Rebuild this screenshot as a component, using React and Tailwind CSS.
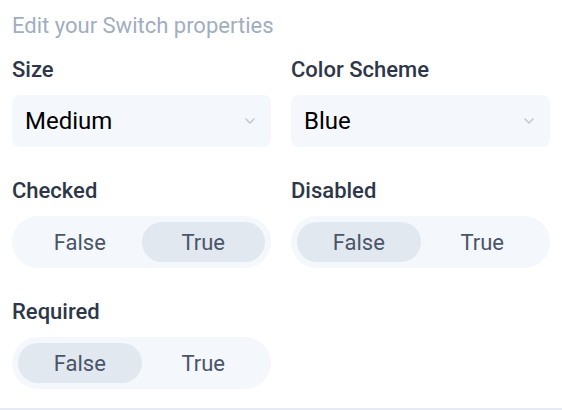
import { ChevronDown } from 'lucide-react'

function Select({ value }) {
  return (
    <div className="h-[52px] rounded-lg bg-[#f4f7fc] flex items-center justify-between pl-[13px] pr-[13px]">
      <span className="text-[24px] text-black">{value}</span>
      <ChevronDown size={16} strokeWidth={2.4} className="text-[#c3c8d0]" />
    </div>
  )
}

function Toggle({ value }) {
  return (
    <div className="h-[52px] rounded-full bg-[#f4f7fc] p-[6px] flex">
      {['False', 'True'].map((opt) => (
        <div
          key={opt}
          className={
            'flex-1 rounded-full flex items-center justify-center text-[22px] text-[#4a5568] ' +
            (value === opt ? 'bg-[#e2e8f0]' : '')
          }
        >
          {opt}
        </div>
      ))}
    </div>
  )
}

function Field({ label, children }) {
  return (
    <div className="flex flex-col">
      <p className="text-[22px] leading-[27px] font-medium text-[#2d3748] mb-3">{label}</p>
      {children}
    </div>
  )
}

export default function App() {
  return (
    <div className="w-[562px] h-[410px] bg-white flex flex-col font-['Roboto',sans-serif]">
      <div className="flex-1 px-3 pt-[11px]">
        {/* Titre */}
        <p className="text-[22px] leading-[30px] text-[#a0aec0] mb-[15px]">Edit your Switch properties</p>

        <div className="grid grid-cols-2 gap-x-5 gap-y-[30px]">
          <Field label="Size">
            <Select value="Medium" />
          </Field>
          <Field label="Color Scheme">
            <Select value="Blue" />
          </Field>
          <Field label="Checked">
            <Toggle value="True" />
          </Field>
          <Field label="Disabled">
            <Toggle value="False" />
          </Field>
          <Field label="Required">
            <Toggle value="False" />
          </Field>
        </div>
      </div>
      <div className="h-[2px] bg-[#e6eaf3]" />
    </div>
  )
}
